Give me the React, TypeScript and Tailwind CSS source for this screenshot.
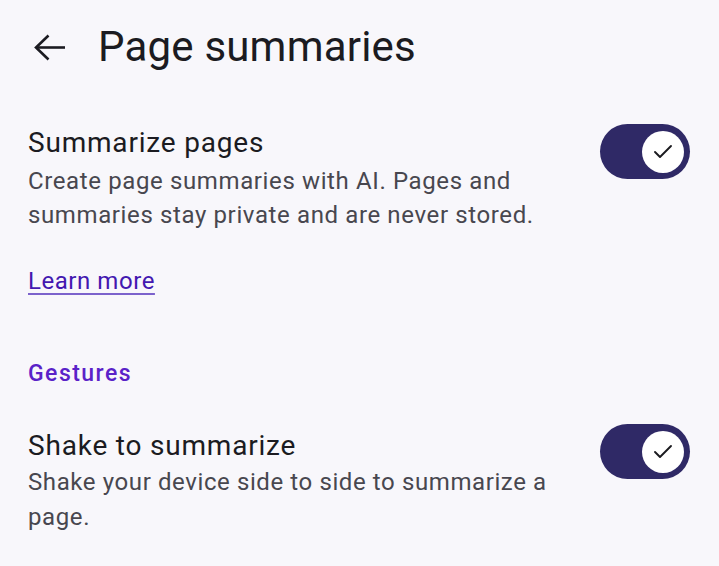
import { Check } from "lucide-react";

const Toggle = () => (
  <div className="w-[90px] h-[55px] rounded-full bg-[#2f2966] flex items-center justify-end pr-[6px] shrink-0">
    <div className="w-[42px] h-[42px] rounded-full bg-white flex items-center justify-center">
      <Check size={24} strokeWidth={1.9} color="#1a1a1f" />
    </div>
  </div>
);

const BackArrow = () => (
  <svg width="32" height="27" viewBox="0 0 32 27" fill="none" stroke="#1b1b21" strokeWidth="2.6">
    <path d="M32 13.5H3" />
    <path d="M15.5 1.5L3 13.5L15.5 25.5" />
  </svg>
);

export default function App() {
  return (
    <div
      className="w-[719px] h-[566px] bg-[#f8f7fb] overflow-hidden text-[#1b1b21]"
      style={{ fontFamily: "Roboto, 'Noto Sans', sans-serif" }}
    >
      <div className="flex items-center h-[94px] pl-[33px]">
        <BackArrow />
        <h1 className="ml-[33px] text-[42px] font-normal leading-none tracking-[0.2px]">Page summaries</h1>
      </div>

      <div className="flex items-start justify-between pl-[28px] pr-[29px] pt-[31px]">
        <div>
          <div className="text-[28px] leading-[36px] tracking-[0.8px]">Summarize pages</div>
          <p className="mt-[3px] text-[24px] leading-[34px] text-[#48474f] tracking-[0.62px]">
            Create page summaries with AI. Pages and
            <br />
            summaries stay private and are never stored.
          </p>
        </div>
        <div className="-mt-[1px]">
          <Toggle />
        </div>
      </div>

      <div className="pl-[28px] pt-[32px]">
        <a
          href="#"
          className="text-[24px] leading-[34px] text-[#4318b0] tracking-[0.55px] underline underline-offset-[4px] decoration-[1.5px] decoration-[#7c62cc]"
        >
          Learn more
        </a>
      </div>

      <div className="pl-[28px] pt-[61px] text-[23px] leading-[30px] font-medium tracking-[1.45px] text-[#5a22c8]">
        Gestures
      </div>

      <div className="flex items-start justify-between pl-[28px] pr-[29px] pt-[39px]">
        <div>
          <div className="text-[28px] leading-[36px] tracking-[0.8px]">Shake to summarize</div>
          <p className="mt-[1px] text-[24px] leading-[35px] text-[#48474f] tracking-[0.6px]">
            Shake your device side to side to summarize a
            <br />
            page.
          </p>
        </div>
        <div className="-mt-[4px]">
          <Toggle />
        </div>
      </div>
    </div>
  );
}
